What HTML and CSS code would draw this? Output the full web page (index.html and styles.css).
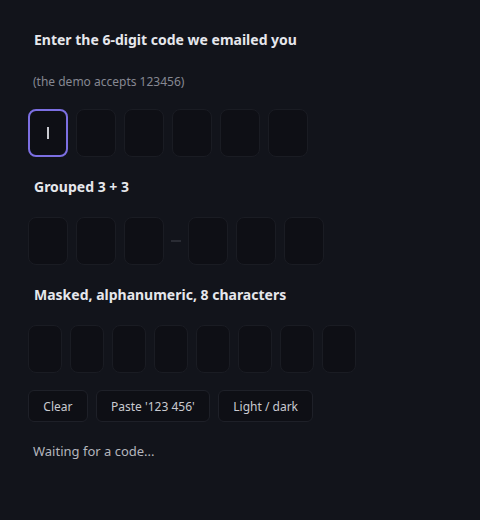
FILE: index.html
```html
<!DOCTYPE html>
<html>
<head>
<meta charset="utf-8">
<link rel="stylesheet" href="styles.css">
</head>
<body>
<main class="page">
  <h2 class="title">Enter the 6-digit code we emailed you</h2>
  <p class="hint">(the demo accepts 123456)</p>
  <div class="row first">
    <div class="cell focused"><span class="caret"></span></div>
    <div class="cell"></div>
    <div class="cell"></div>
    <div class="cell"></div>
    <div class="cell"></div>
    <div class="cell"></div>
  </div>

  <h2 class="title sub">Grouped 3 + 3</h2>
  <div class="row">
    <div class="cell"></div>
    <div class="cell"></div>
    <div class="cell"></div>
    <span class="dash"></span>
    <div class="cell"></div>
    <div class="cell"></div>
    <div class="cell"></div>
  </div>

  <h2 class="title sub">Masked, alphanumeric, 8 characters</h2>
  <div class="row">
    <div class="cell narrow"></div>
    <div class="cell narrow"></div>
    <div class="cell narrow"></div>
    <div class="cell narrow"></div>
    <div class="cell narrow"></div>
    <div class="cell narrow"></div>
    <div class="cell narrow"></div>
    <div class="cell narrow"></div>
  </div>

  <div class="actions">
    <button class="btn">Clear</button>
    <button class="btn">Paste '123 456'</button>
    <button class="btn">Light / dark</button>
  </div>
  <p class="status">Waiting for a code...</p>
</main>
</body>
</html>
```
FILE: styles.css
```css
html, body {
  margin: 0;
  padding: 0;
  background: #12141b;
  height: 100%;
}
body {
  font-family: "Noto Sans", "Open Sans", sans-serif;
  color: #e4e5ea;
}
.page {
  padding: 30px 28px 0 28px;
}
.title {
  margin: 0;
  padding-left: 6px;
  font-size: 14px;
  line-height: 20px;
  font-weight: 700;
  color: #e6e7ec;
}
.sub {
  margin-top: 20px;
}
.hint {
  margin: 24px 0 0 0;
  padding-left: 5px;
  font-size: 12px;
  line-height: 16px;
  color: #868892;
}
.row {
  display: flex;
  align-items: center;
  gap: 8px;
  margin-top: 20px;
}
.row.first {
  margin-top: 19px;
}
.cell {
  box-sizing: border-box;
  width: 40px;
  height: 48px;
  border-radius: 8px;
  background: #0e0f15;
  border: 1px solid #1a1c23;
  display: flex;
  align-items: center;
  justify-content: center;
}
.cell.narrow {
  width: 34px;
}
.cell.focused {
  border: 2px solid #7c6fe2;
}
.caret {
  width: 2px;
  height: 12px;
  background: #c9cad0;
}
.dash {
  width: 10px;
  height: 2px;
  margin: 0 -1px;
  background: #2a2c34;
}
.actions {
  display: flex;
  gap: 8px;
  margin-top: 17px;
}
.btn {
  box-sizing: border-box;
  height: 32px;
  padding: 0 14.3px;
  border-radius: 6px;
  background: #0e0f15;
  border: 1px solid #1e2028;
  color: #c9cad0;
  font-family: "Noto Sans", "Open Sans", sans-serif;
  font-size: 12px;
}
.status {
  margin: 20px 0 0 0;
  padding-left: 5px;
  font-size: 13px;
  line-height: 18px;
  color: #b4b6bd;
}
```
